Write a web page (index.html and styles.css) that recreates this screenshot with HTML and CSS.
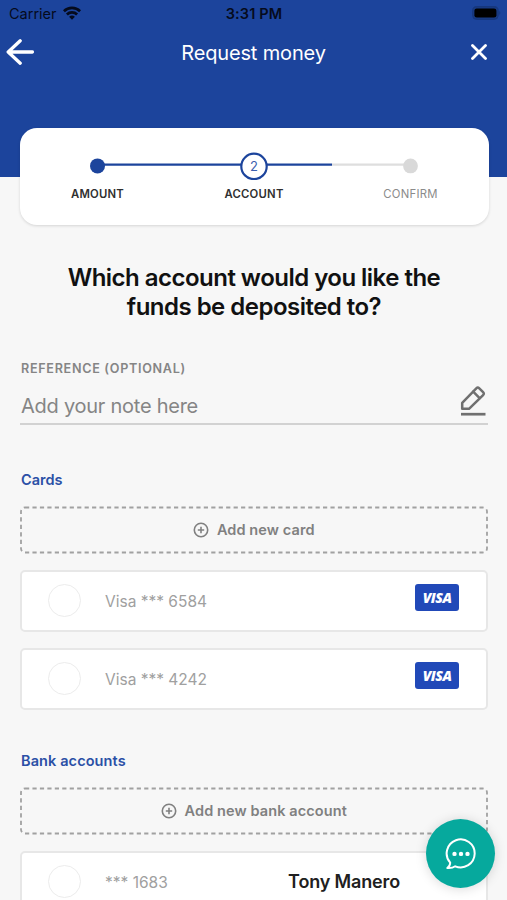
FILE: index.html
```html
<!DOCTYPE html>
<html lang="en">
<head>
<meta charset="utf-8">
<title>Request money</title>
<link rel="stylesheet" href="styles.css">
</head>
<body>
<div class="screen">
  <header class="header">
    <div class="status">
      <div class="carrier"><span class="carrier-name">Carrier</span>
        <svg class="wifi" width="18" height="14" viewBox="0 0 18 14"><g fill="none" stroke="#050b1c" stroke-width="2.700"><path d="M.9 5.200C5.400.7 12.600.7 17.100 5.200"/><path d="M3.900 8.500c2.800-2.800 7.400-2.800 10.200 0"/></g><path d="M9 13.700 6.100 10.800q2.900-2.400 5.800 0z" fill="#050b1c"/></svg>
      </div>
      <span class="time">3:31 PM</span>
      <svg class="battery" width="29" height="14" viewBox="0 0 29 14"><rect x=".6" y=".6" width="25.600" height="12.800" rx="4" fill="#183a83" stroke="#17377c"/><rect x="2.400" y="2.400" width="22" height="9.200" rx="2.400" fill="#000"/><path d="M27.300 4.800q2 2.200 0 4.400z" fill="#17377c"/></svg>
    </div>
    <nav class="nav">
      <svg class="back" width="28" height="26" viewBox="0 0 28 26"><path d="M14.200 1.800 2.200 13l12 11.200M2.400 13h24" fill="none" stroke="#fff" stroke-width="3.300" stroke-linecap="round" stroke-linejoin="round"/></svg>
      <h1 class="title">Request money</h1>
      <svg class="close" width="16" height="16" viewBox="0 0 16 16"><path d="m1.500 1.500 13 13m0-13-13 13" stroke="#fff" stroke-width="2.800" stroke-linecap="round"/></svg>
    </nav>
  </header>

  <section class="steps">
    <svg class="track" width="330" height="28" viewBox="0 0 330 28"><path d="M8.500 12.600H243" stroke="#1c449c" stroke-width="2.300"/><path d="M243 12.600H322" stroke="#dedede" stroke-width="2.300"/><circle cx="8.500" cy="13.900" r="7.500" fill="#1c449c"/><circle cx="165" cy="14.400" r="12.700" fill="#fff" stroke="#1c449c" stroke-width="2.200"/><text class="step-number" x="165" y="19.200" text-anchor="middle">2</text><circle cx="321.500" cy="13.900" r="7.400" fill="#d9d9d9"/></svg>
    <div class="step-labels">
      <span class="step-label">AMOUNT</span>
      <span class="step-label">ACCOUNT</span>
      <span class="step-label pending">CONFIRM</span>
    </div>
  </section>

  <main class="content">
    <h2 class="question">Which account would you like the<br>funds be deposited to?</h2>

    <div class="reference">
      <div class="reference-label">REFERENCE (OPTIONAL)</div>
      <div class="note">
        <span class="note-text">Add your note here</span>
        <svg class="pencil" width="26" height="32" viewBox="0 0 26 32"><g fill="none" stroke="#707070" stroke-width="2.500" stroke-linecap="round" stroke-linejoin="round"><path d="M2.200 23.800v-6L16.300 3.300q1.500-1.500 3 0l3.800 3.800q1.500 1.500 0 3L9 23.800z"/><path d="m13.200 6.700 6.400 6.400"/></g><path d="M1 29.200h24.500" stroke="#707070" stroke-width="2.700"/></svg>
      </div>
    </div>

    <h3 class="group-title cards-title">Cards</h3>
    <div class="add">
      <svg class="dashes" width="468" height="48"><rect x="1" y="1.500" width="466" height="45" rx="4"/></svg>
      <svg class="plus" width="16" height="16" viewBox="0 0 16 16"><circle cx="8" cy="8" r="6.700"/><path d="M8 4.800v6.400M4.800 8h6.400"/></svg>
      <span class="add-text">Add new card</span>
    </div>
    <div class="account"><span class="radio"></span><span class="number">Visa *** 6584</span><span class="visa"><span class="visa-word">VISA</span></span></div>
    <div class="account"><span class="radio"></span><span class="number">Visa *** 4242</span><span class="visa"><span class="visa-word">VISA</span></span></div>

    <h3 class="group-title bank-title">Bank accounts</h3>
    <div class="add">
      <svg class="dashes" width="468" height="48"><rect x="1" y="1.500" width="466" height="45" rx="4"/></svg>
      <svg class="plus" width="16" height="16" viewBox="0 0 16 16"><circle cx="8" cy="8" r="6.700"/><path d="M8 4.800v6.400M4.800 8h6.400"/></svg>
      <span class="add-text">Add new bank account</span>
    </div>
    <div class="account bank"><span class="radio"></span><span class="number">*** 1683</span><span class="owner">Tony Manero</span></div>
  </main>

  <div class="chat">
    <svg width="32" height="32" viewBox="0 0 32 32"><path d="M5.200 24.700A14 14 0 1 1 10.200 28.300Q7 30.500 2.300 30q2.800-2 2.900-5.300Z" fill="none" stroke="#fff" stroke-width="2" stroke-linejoin="round"/><g fill="#fff"><circle cx="9.500" cy="15.900" r="2.200"/><circle cx="16" cy="15.900" r="2.200"/><circle cx="22.500" cy="15.900" r="2.200"/></g></svg>
  </div>
</div>
</body>
</html>
```
FILE: styles.css
```css
* { box-sizing: border-box; }
html, body { margin: 0; overflow: hidden; }
body { font-family: Inter, "Liberation Sans", sans-serif; }
h1, h2, h3 { margin: 0; }
svg { display: block; flex: none; }
.screen { position: relative; width: 507px; height: 900px; overflow: hidden; background: #f7f7f7; }

.header { height: 177px; background: #1c449c; }
.status { display: grid; grid-template-columns: 1fr auto 1fr; align-items: center; height: 28px; padding: 0 6px 0 9px; color: #050b1c; }
.carrier { display: flex; align-items: center; gap: 6px; }
.carrier-name { font-size: 14.500px; margin-top: -1px; }
.wifi { margin-top: -3px; }
.time { font-size: 14.500px; font-weight: 600; letter-spacing: .15px; margin: -1px 2px 0 0; }
.battery { justify-self: end; margin-top: -2px; }
.nav { display: grid; grid-template-columns: 1fr auto 1fr; align-items: center; height: 48px; padding: 0 20px 0 6px; }
.title { color: #fff; font-size: 20px; font-weight: 400; line-height: 28px; letter-spacing: -.15px; padding: 1px 0 0 14px; }
.close { justify-self: end; }

.steps { width: 469px; height: 97px; margin: -49px 0 0 19.500px; padding-top: 24px; border-radius: 17px; background: #fff; box-shadow: 0 1px 3px rgba(0,0,0,.14); }
.track { margin: 0 auto; }
.step-number { font-size: 13px; fill: #3c5fae; }
.step-labels { display: grid; grid-template-columns: repeat(3, 156.500px); justify-content: center; margin-top: 6px; }
.step-label { text-align: center; font-size: 11.300px; line-height: 16px; font-weight: 600; letter-spacing: .25px; color: #303030; }
.pending { color: #8b8b8b; font-weight: 400; }

.content { padding: 38px 19px 0 20px; }
.question { font-size: 24px; line-height: 29px; font-weight: 600; text-align: center; color: #111; letter-spacing: -.52px; }
.reference { margin-top: 39px; border-bottom: 2px solid #d2d2d2; }
.reference-label { font-size: 12.600px; line-height: 18px; font-weight: 600; letter-spacing: .7px; color: #858585; padding-left: 1px; }
.note { display: flex; justify-content: space-between; height: 45px; padding: 0 2px 0 1px; }
.note-text { font-size: 20px; line-height: 28px; letter-spacing: -.25px; color: #858585; margin-top: 14px; }
.pencil { margin-top: 7px; }

.group-title { font-size: 14.500px; line-height: 20px; font-weight: 600; color: #2b50a6; padding-left: 1px; }
.cards-title { margin-top: 45px; }
.bank-title { margin-top: 41px; letter-spacing: .1px; }
.add { position: relative; display: flex; align-items: center; justify-content: center; gap: 7.500px; height: 48px; margin-top: 16px; color: #808080; }
.dashes { position: absolute; inset: 0; }
.dashes rect { fill: none; stroke: #a1a1a1; stroke-width: 1.800px; stroke-dasharray: 4.200 3.250; }
.plus { fill: none; stroke: #808080; stroke-width: 1.600px; }
.add-text { font-size: 14.500px; line-height: 20px; font-weight: 600; letter-spacing: .1px; }
.account { display: flex; align-items: center; height: 62px; margin-top: 16px; padding: 0 27px 0 26px; border: 2px solid #e7e7e7; border-radius: 5px; background: #fff; }
.radio { width: 33px; height: 33px; margin-top: -1px; border: 1px solid #ececec; border-radius: 50%; }
.number { margin: 1px 0 0 24px; font-size: 15.500px; line-height: 22px; color: #a0a0a0; }
.visa { display: flex; align-items: center; justify-content: center; width: 44px; height: 27px; margin: -7px 0 0 auto; border-radius: 3px; background: #2149b8; color: #fff; }
.visa-word { font: italic 800 14px/18px "Open Sans", sans-serif; letter-spacing: -.5px; }
.owner { margin-left: auto; margin-right: 59px; font-size: 18px; font-weight: 600; line-height: 24px; letter-spacing: -.15px; color: #202020; }

.chat { position: absolute; left: 426px; top: 819px; display: grid; place-items: center; width: 69px; height: 69px; border-radius: 50%; background: #06a99d; box-shadow: 0 1px 12px rgba(0,0,0,.15); }
```
